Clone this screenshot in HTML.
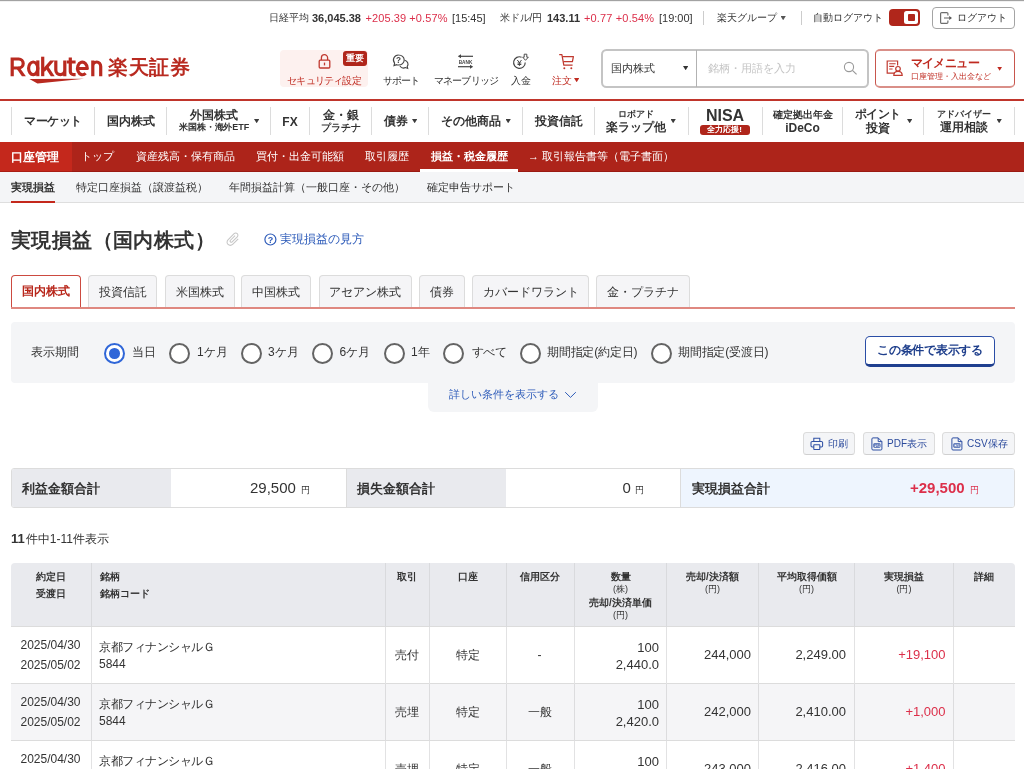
<!DOCTYPE html>
<html lang="ja">
<head>
<meta charset="utf-8">
<title>実現損益（国内株式）</title>
<style>
*{box-sizing:border-box;margin:0;padding:0}
html,body{width:1024px;height:769px;overflow:hidden;background:#fff}
body{font-family:"Liberation Sans",sans-serif;color:#333;position:relative;font-size:12px;line-height:1}
#wrap{position:absolute;left:0;top:0;width:1024px;height:769px;overflow:hidden;will-change:transform;opacity:0.999}
.a{position:absolute;white-space:nowrap;overflow:visible}
.b{font-weight:bold}
.r{color:#dc2f4a !important}
.c{text-align:center}
.rt{text-align:right}
/* top bar */
#topline{left:0;top:0;width:1024px;height:2px;background:linear-gradient(#a2a2a2 0,#a2a2a2 50%,#f1f1f1 50%,#f1f1f1 100%)}
.tb{top:12px;font-size:11px;height:12px;line-height:12px;color:#333}
.j{font-size:10px}
.dn{width:5.3px;height:4.3px;color:#3c3c3c;background:currentColor;clip-path:polygon(0 0,100% 0,50% 100%)}
.hl{top:75px;font-size:10px;height:11px;line-height:11px;letter-spacing:-0.8px;color:#333}
.vsep{width:1px;background:#ccc}
/* nav */
.nv{font-size:12px;font-weight:bold;color:#333;text-align:center;line-height:14px}
.kn{letter-spacing:-0.5px}
.kn2{letter-spacing:-0.3px}
.nv small{font-size:9px;display:block;line-height:11px;font-weight:bold}
.ns{top:107px;height:28px;width:1px;background:#dcdcdc}
.tri{font-size:7px;font-weight:normal}
/* red bar */
#redbar{left:0;top:142px;width:1024px;height:30px;background:#ad241a}
#redact{left:0;top:142px;width:72px;height:30px;background:#c4281c}
.rb{top:150px;height:12px;line-height:12px;font-size:11px;color:#fff}
/* subnav */
#subnav{left:0;top:172px;width:1024px;height:31px;background:#f4f5f7;border-bottom:1px solid #dedede}
.sn{top:181px;height:12px;line-height:12px;font-size:11px;color:#333}

/* main */
.tab{top:275px;height:32.3px;border:1px solid #dcdcdc;border-bottom:none;border-radius:4px 4px 0 0;background:#f5f5f7;font-size:12px;line-height:32px;text-align:center;color:#333}
.tab.act{background:#fff;border:1.2px solid #cc4a40;border-bottom:none;color:#b8281c;font-weight:bold;line-height:31.6px}
.fl{top:346px;height:13px;line-height:13px;font-size:12px;color:#333}
.rd{top:342.7px;width:21px;height:21px;margin-left:-0.4px;border-radius:50%;border:2px solid #646464;background:#fff}
.rd.on{border:2px solid #2f66d8}
.rd.on:after{content:"";position:absolute;left:3.3px;top:3.3px;width:10.6px;height:10.6px;border-radius:50%;background:#2f66d8}
.ab{top:432px;height:23px;border:1px solid #dcdcdc;border-bottom-color:#d0d0d0;border-radius:3.5px;background:#f4f5f7}
.abt{top:438px;height:12px;line-height:12px;font-size:10px;color:#2b4a9c}
.sm{top:480.5px;font-size:13.4px;height:15px;line-height:15px;color:#333}
.sv{top:480px;font-size:15px;height:16px;line-height:16px;color:#333}
.yen{top:485px;font-size:9px;height:10px;line-height:10px;color:#333}
.vl{top:0;width:1px;height:240px;background:linear-gradient(#d9dadd 0,#d9dadd 64px,#e2e2e3 64px,#e2e2e3 121px,#dcdcde 121px,#dcdcde 178px,#e2e2e3 178px)}
.th{font-size:10px;font-weight:bold;line-height:17px;color:#333}
.th .l1{display:block;line-height:12px}
.th .u{display:block;font-weight:normal;font-size:9px;line-height:12px}
.td{font-size:12px;line-height:14px;color:#333}
.nm{font-size:13px}
.kn3{letter-spacing:-0.45px}
</style>
</head>
<body>
<div id="wrap">
<!-- TOP BAR -->
<div class="a" id="topline"></div>
<div class="a tb j" style="left:268.5px">日経平均</div>
<div class="a tb b" style="left:312px">36,045.38</div>
<div class="a tb r" style="left:365.5px;letter-spacing:0.09px">+205.39 +0.57%</div>
<div class="a tb" style="left:452px">[15:45]</div>
<div class="a tb j" style="left:499.5px">米ドル/円</div>
<div class="a tb b" style="left:547px">143.11</div>
<div class="a tb r" style="left:584px;letter-spacing:0.15px">+0.77 +0.54%</div>
<div class="a tb" style="left:659px">[19:00]</div>
<div class="a vsep" style="left:703px;top:11px;height:14px"></div>
<div class="a tb j" style="left:716.5px">楽天グループ</div>
<div class="a dn" style="left:780.5px;top:16px;color:#555"></div>
<div class="a vsep" style="left:800.5px;top:11px;height:14px"></div>
<div class="a tb j" style="left:813px">自動ログアウト</div>
<div class="a" style="left:889px;top:9.2px;width:30.8px;height:17px;border-radius:4px;background:#b0261b"></div>
<div class="a" style="left:904px;top:11.2px;width:14px;height:13px;border-radius:2.5px;background:#fff"></div>
<div class="a" style="left:908px;top:14.2px;width:7px;height:7px;border-radius:1px;background:#b0261b"></div>
<div class="a" style="left:932px;top:7px;width:83px;height:22px;border:1px solid #a4a4a4;border-radius:4px;background:#fff"></div>
<svg class="a" style="left:940.2px;top:11.8px" width="13" height="12" viewBox="0 0 13 12"><path d="M7.9 3.6V1.7a1.1 1.1 0 0 0-1.1-1.1H1.7a1.1 1.1 0 0 0-1.1 1.1v8.6a1.1 1.1 0 0 0 1.1 1.1h5.1a1.1 1.1 0 0 0 1.1-1.1V8.4" fill="none" stroke="#6e6e6e" stroke-width="1.2"/><path d="M4 6h5.4" stroke="#6e6e6e" stroke-width="1.1"/><path d="M9.2 3.9L12 6 9.2 8.1z" fill="#555"/></svg>
<div class="a tb j" style="left:957px">ログアウト</div>

<!-- HEADER -->
<div class="a" id="logo" style="left:10px;top:55px;width:100px;height:30px">
<svg width="100" height="30" viewBox="0 0 100 30" aria-label="Rakuten"><title>Rakuten</title><g fill="none" stroke="#b92a20" stroke-width="3.2" stroke-linejoin="round">
<path d="M2.2 21.2V2.4M2.2 4H8.7a4.5 4.5 0 0 1 0 9H2.2"/>
<ellipse cx="23.2" cy="13.3" rx="4.6" ry="6.3"/><path d="M27.8 5.4V21.2"/>
<path d="M32.7 1.7V21.2"/>
<path d="M45.8 5.4V15.1a4.5 4.5 0 0 0 9 0V5.4M54.8 5.4V21.2"/>
<path d="M60.3 2.4V16.4a3.2 3.2 0 0 0 3.2 3.2H65.6M56.8 7H65.6"/>
<path d="M67.6 13.5H77.3A4.9 6.3 0 1 0 75.6 18.2"/>
<path d="M82.8 21.2V5.4M82.8 11.4a3.95 4.4 0 0 1 7.9 0V21.2"/>
</g><g fill="#b92a20"><path d="M6.3 13.33L8.9 11.47 15.84 21.2H11.92z"/><path d="M32.29 14.55L34.71 16.65 44.43 5.4H40.2z"/><path d="M35.06 12.48L37.74 10.72 44.66 21.2H40.81z"/><path d="M19.4 24 L74 23.8 L27.5 28.4 Z"/></g></svg>
</div>
<div class="a b" style="left:108px;top:57px;font-size:20px;line-height:21px;height:21px;color:#b92a20;letter-spacing:0.5px">楽天証券</div>

<div class="a" style="left:280px;top:49.5px;width:88px;height:37px;background:#fdf1ef;border-radius:4px"></div>
<svg class="a" style="left:318px;top:54px" width="13" height="15" viewBox="0 0 13 15"><rect x="1.2" y="6.2" width="10.6" height="7.8" rx="1" fill="none" stroke="#c0392f" stroke-width="1.3"/><path d="M3.4 6V3.8a3.1 3.1 0 0 1 6.2 0V6" fill="none" stroke="#c0392f" stroke-width="1.3"/><path d="M6.5 8.6v2.8" stroke="#c0392f" stroke-width="1.3"/></svg>
<div class="a c hl" style="left:280px;width:88px;color:#bf2a20">セキュリティ設定</div>
<div class="a c" style="left:343px;top:51px;width:24px;height:14.5px;border-radius:3px;background:#b0261b;color:#fff;font-size:9px;line-height:14px;font-weight:bold">重要</div>
<svg class="a" style="left:392px;top:54px" width="18" height="16" viewBox="0 0 18 16"><path d="M6.6 1a5.6 5 0 0 1 0 10 6 6 0 0 1-2-.35L2 11.6l.6-2.4A5 5 0 0 1 6.6 1z" fill="#fff" stroke="#444" stroke-width="1.1"/><path d="M12.6 6.2a4.4 4 0 0 1 2.6 6.2l.5 2-2.2-.8a4.6 4.6 0 0 1-5.6-1.6" fill="none" stroke="#444" stroke-width="1.1"/><text x="6.6" y="9" font-family="Liberation Sans, sans-serif" font-size="8.2" font-weight="bold" text-anchor="middle" fill="#444">?</text></svg>
<div class="a c hl" style="left:371px;width:60px">サポート</div>
<svg class="a" style="left:457px;top:54px" width="17" height="15" viewBox="0 0 17 15"><path d="M3 2.3H16" stroke="#444" stroke-width="1.2"/><path d="M0.8 2.3L4 0.3V4.3z" fill="#444"/><path d="M1 12.7H14" stroke="#444" stroke-width="1.2"/><path d="M16.2 12.7L13 10.7V14.7z" fill="#444"/><text x="8.5" y="9.5" font-family="Liberation Sans, sans-serif" font-size="5.6" font-weight="bold" text-anchor="middle" fill="#444" textLength="13.6" lengthAdjust="spacingAndGlyphs">BANK</text></svg>
<div class="a c hl" style="left:426px;width:80px">マネーブリッジ</div>
<svg class="a" style="left:512px;top:53px" width="18" height="17" viewBox="0 0 18 17"><path d="M9.6 4.2A5.8 5.8 0 1 0 13.2 9.4" fill="none" stroke="#444" stroke-width="1.15"/><path d="M5.3 7L7.4 9.7 9.5 7M7.4 9.7v3.2M5.5 10h3.8M5.5 11.5h3.8" fill="none" stroke="#444" stroke-width="1"/><path d="M12.2 1.2h2.6v3h1.5l-2.8 3.1L10.7 4.2h1.5z" fill="#fff" stroke="#444" stroke-width="0.95" stroke-linejoin="round"/></svg>
<div class="a c hl" style="left:501px;width:40px;letter-spacing:0">入金</div>
<svg class="a" style="left:559px;top:54px" width="16" height="16" viewBox="0 0 16 16"><path d="M0.2 0.7H2.9L4.8 11.1H13.6" fill="none" stroke="#c0392f" stroke-width="1.25" stroke-linejoin="round"/><path d="M3.5 2.6H14.4L13.4 7.7H4.4" fill="none" stroke="#c0392f" stroke-width="1.25" stroke-linejoin="round"/><circle cx="5.3" cy="14.2" r="1" fill="#c0392f"/><circle cx="12.3" cy="14.2" r="1" fill="#c0392f"/></svg>
<div class="a hl" style="left:552px;color:#bf2a20;letter-spacing:0">注文</div>
<div class="a dn" style="left:574px;top:78px;color:#bf2a20"></div>

<div class="a" style="left:601px;top:49px;width:268px;height:39px;border:2px solid #c4c4c4;border-radius:5.5px;background:#fff"></div>
<div class="a" style="left:696px;top:50px;width:1px;height:37px;background:#b2b2b2"></div>
<div class="a" style="left:610.5px;top:61.5px;font-size:11px;height:12px;line-height:12px">国内株式</div>
<div class="a dn" style="left:683px;top:66px;color:#333"></div>
<div class="a" style="left:708px;top:62px;font-size:11.3px;height:13px;line-height:13px;color:#c4c4c4">銘柄・用語を入力</div>
<svg class="a" style="left:843px;top:61px" width="15" height="15" viewBox="0 0 15 15"><circle cx="6" cy="6" r="4.6" fill="none" stroke="#999" stroke-width="1.1"/><path d="M9.4 9.4L13.6 13.4" stroke="#999" stroke-width="1.2"/></svg>

<div class="a" style="left:875px;top:49px;width:140px;height:39px;border:2px solid #d98f88;border-left:1px solid #c8564d;border-right:1px solid #c8564d;border-radius:5px;background:#fff"></div>
<svg class="a" style="left:886px;top:60px" width="18" height="17" viewBox="0 0 18 17"><path d="M9.6 13.2H1.2V1h10.4v4.6" fill="none" stroke="#c0392f" stroke-width="1.2"/><path d="M3.2 3.8h6.4M3.2 6.4h5M3.2 9h3.4" stroke="#c0392f" stroke-width="1.1"/><circle cx="12" cy="8.8" r="2.3" fill="#fff" stroke="#c0392f" stroke-width="1.2"/><path d="M7.8 15.4c0-2.6 1.8-4 4.2-4s4.2 1.4 4.2 4z" fill="#fff" stroke="#c0392f" stroke-width="1.2"/></svg>
<div class="a b" style="left:910.5px;top:56.5px;font-size:12px;height:13px;line-height:13px;color:#bf2a20;letter-spacing:-0.6px">マイメニュー</div>
<div class="a" style="left:910.5px;top:72px;font-size:8px;height:9px;line-height:9px;color:#bf2a20">口座管理・入出金など</div>
<div class="a dn" style="left:997px;top:66.5px;color:#bf2a20"></div>

<div class="a" style="left:0;top:99px;width:1024px;height:2px;background:#c0352b"></div>

<!-- GLOBAL NAV -->
<div class="a ns" style="left:11px"></div>
<div class="a nv kn" style="left:12px;top:114px;width:82px">マーケット</div>
<div class="a ns" style="left:94px"></div>
<div class="a nv" style="left:95px;top:114px;width:71px">国内株式</div>
<div class="a ns" style="left:166px"></div>
<div class="a nv" style="left:169px;top:108px;width:90px">外国株式<small style="letter-spacing:-0.1px">米国株・海外ETF</small></div>
<div class="a dn" style="left:254px;top:119px"></div>
<div class="a ns" style="left:270px"></div>
<div class="a nv" style="left:271px;top:115px;width:38px">FX</div>
<div class="a ns" style="left:309px"></div>
<div class="a nv" style="left:310px;top:108px;width:61px">金・銀<small style="font-size:9.5px">プラチナ</small></div>
<div class="a ns" style="left:371px"></div>
<div class="a nv" style="left:383.5px;top:114px;text-align:left">債券</div>
<div class="a dn" style="left:412px;top:119px"></div>
<div class="a ns" style="left:428px"></div>
<div class="a nv" style="left:441px;top:114px;text-align:left">その他商品</div>
<div class="a dn" style="left:505.5px;top:119px"></div>
<div class="a ns" style="left:522px"></div>
<div class="a nv" style="left:523px;top:114px;width:71px">投資信託</div>
<div class="a ns" style="left:594px"></div>
<div class="a nv" style="left:594px;top:109px;width:84px"><small style="line-height:11px">ロボアド</small>楽ラップ他</div>
<div class="a dn" style="left:670.5px;top:119px"></div>
<div class="a ns" style="left:688px"></div>
<div class="a nv" style="left:689px;top:108px;width:72px;font-size:16px;line-height:16px">NISA</div>
<div class="a c b" style="left:699.5px;top:125px;width:50px;height:10px;border-radius:3px;background:#b0261b;color:#fff;font-size:8px;line-height:10px">全力応援!</div>
<div class="a ns" style="left:762px"></div>
<div class="a nv" style="left:763px;top:109px;width:79px"><small style="line-height:11px;font-size:9.5px;margin-bottom:1px">確定拠出年金</small>iDeCo</div>
<div class="a ns" style="left:842px"></div>
<div class="a nv" style="left:843px;top:108px;width:69px;line-height:13.5px"><span class="kn">ポイント</span><br>投資</div>
<div class="a dn" style="left:907px;top:119px"></div>
<div class="a ns" style="left:923px"></div>
<div class="a nv" style="left:924px;top:109px;width:79px"><small style="line-height:11px">アドバイザー</small>運用相談</div>
<div class="a dn" style="left:996.5px;top:119px"></div>
<div class="a ns" style="left:1014px"></div>

<!-- RED BAR -->
<div class="a" id="redbar"></div>
<div class="a" id="redact"></div>
<div class="a rb b" style="left:11px;top:151px;font-size:12px">口座管理</div>
<div class="a rb" style="left:81px">トップ</div>
<div class="a rb" style="left:136px">資産残高・保有商品</div>
<div class="a rb" style="left:256px">買付・出金可能額</div>
<div class="a rb" style="left:365px">取引履歴</div>
<div class="a rb b" style="left:431px">損益・税金履歴</div>
<div class="a" style="left:0;top:171px;width:1024px;height:1px;background:rgba(120,10,5,0.35)"></div>
<div class="a" style="left:420px;top:169px;width:98px;height:2.5px;background:#fff"></div>
<div class="a rb" style="left:528px">→ 取引報告書等（電子書面）</div>

<!-- SUB NAV -->
<div class="a" id="subnav"></div>
<div class="a sn b" style="left:11px">実現損益</div>
<div class="a" style="left:11px;top:201px;width:44px;height:2px;background:#c4281c"></div>
<div class="a sn" style="left:76px">特定口座損益（譲渡益税）</div>
<div class="a sn" style="left:229px">年間損益計算（一般口座・その他）</div>
<div class="a sn" style="left:427px">確定申告サポート</div>


<!-- TITLE -->
<div class="a b" style="left:11px;top:229px;font-size:20px;height:22px;line-height:22px;color:#333;letter-spacing:0.4px">実現損益（国内株式）</div>
<svg class="a" style="left:223px;top:229px" width="20" height="20" viewBox="0 0 20 20"><g transform="translate(10 10.4) rotate(45) scale(0.69) translate(-12.5 -12)"><path d="M16.5 6v11.5c0 2.21-1.79 4-4 4s-4-1.79-4-4V5c0-1.38 1.12-2.5 2.5-2.5s2.5 1.12 2.5 2.5v10.5c0 .55-.45 1-1 1s-1-.45-1-1V6H10v9.5c0 1.38 1.12 2.5 2.5 2.5s2.5-1.12 2.5-2.5V5c0-2.21-1.79-4-4-4S7 2.79 7 5v12.5c0 3.04 2.46 5.5 5.5 5.5s5.5-2.46 5.5-5.5V6h-1.5z" fill="#c6c6c6"/></g></svg>
<svg class="a" style="left:264px;top:232.5px" width="13" height="13" viewBox="0 0 13 13"><circle cx="6.4" cy="6.5" r="5.5" fill="none" stroke="#2d5bb9" stroke-width="1.2"/><text x="6.4" y="9.7" font-family="Liberation Sans, sans-serif" font-size="9" font-weight="bold" text-anchor="middle" fill="#2d5bb9">?</text></svg>
<div class="a" style="left:280px;top:233px;font-size:12px;height:13px;line-height:13px;color:#2d5bb9">実現損益の見方</div>

<!-- TABS -->
<div class="a" style="left:10.5px;top:307.2px;width:1004.5px;height:1.4px;background:#df8880"></div>
<div class="a tab act" style="left:10.5px;width:70.5px">国内株式</div>
<div class="a tab" style="left:88px;width:69px">投資信託</div>
<div class="a tab" style="left:165px;width:69.5px">米国株式</div>
<div class="a tab" style="left:241px;width:69.5px">中国株式</div>
<div class="a tab" style="left:318.5px;width:93px">アセアン株式</div>
<div class="a tab" style="left:419px;width:46px">債券</div>
<div class="a tab" style="left:472px;width:117px">カバードワラント</div>
<div class="a tab" style="left:596px;width:94px">金・プラチナ</div>

<!-- FILTER -->
<div class="a" style="left:10.5px;top:322px;width:1004px;height:61px;background:#f4f5f7;border-radius:4px"></div>
<div class="a" style="left:428px;top:379px;width:169.5px;height:32.5px;background:#f4f5f7;border-radius:0 0 6px 6px"></div>
<div class="a fl" style="left:31px">表示期間</div>
<div class="a rd on" style="left:104.5px"></div><div class="a fl" style="left:131.5px">当日</div>
<div class="a rd" style="left:169.5px"></div><div class="a fl" style="left:197px">1ケ月</div>
<div class="a rd" style="left:241px"></div><div class="a fl" style="left:268px">3ケ月</div>
<div class="a rd" style="left:312.5px"></div><div class="a fl" style="left:339.5px">6ケ月</div>
<div class="a rd" style="left:384px"></div><div class="a fl" style="left:411px">1年</div>
<div class="a rd" style="left:443.5px"></div><div class="a fl" style="left:471.5px;letter-spacing:-0.5px">すべて</div>
<div class="a rd" style="left:520px"></div><div class="a fl" style="left:547px;letter-spacing:-0.2px">期間指定(約定日)</div>
<div class="a rd" style="left:651px"></div><div class="a fl" style="left:678px;letter-spacing:-0.2px">期間指定(受渡日)</div>
<div class="a c b" style="left:865px;top:336px;width:130px;height:30.5px;border:1px solid #2a4da6;border-bottom:3px solid #1f3f8f;border-radius:5px;background:#fff;color:#1f3f8c;font-size:12px;line-height:27px;letter-spacing:-0.3px">この条件で表示する</div>
<div class="a" style="left:448.5px;top:388px;height:13px;line-height:13px;font-size:11px;color:#2d5bb9">詳しい条件を表示する</div>
<svg class="a" style="left:564px;top:391px" width="13" height="8" viewBox="0 0 13 8"><path d="M1.2 1.2L6.5 6.4 11.8 1.2" fill="none" stroke="#2d5bb9" stroke-width="1"/></svg>

<!-- ACTION BUTTONS -->
<div class="a ab" style="left:802.5px;width:52.5px"></div>
<svg class="a" style="left:810px;top:436.5px" width="14" height="14" viewBox="0 0 14 14"><path d="M3.8 4.4V1.2h6v3.2" fill="none" stroke="#2f50a4" stroke-width="1.05"/><path d="M3.8 10H2.2a1.2 1.2 0 0 1-1.2-1.2V5.6a1.2 1.2 0 0 1 1.2-1.2h9.2a1.2 1.2 0 0 1 1.2 1.2v3.2a1.2 1.2 0 0 1-1.2 1.2H9.8" fill="none" stroke="#2f50a4" stroke-width="1.05"/><rect x="3.8" y="7.8" width="6" height="4.6" rx=".4" fill="none" stroke="#2f50a4" stroke-width="1.05"/></svg>
<div class="a abt" style="left:828px">印刷</div>
<div class="a ab" style="left:862.5px;width:72.5px"></div>
<svg class="a" style="left:871px;top:436.5px" width="12" height="14" viewBox="0 0 12 14"><path d="M7.2 .9H2A1.1 1.1 0 0 0 .9 2v9.9A1.1 1.1 0 0 0 2 13h7.8a1.1 1.1 0 0 0 1.1-1.1V4.6z" fill="none" stroke="#2f50a4" stroke-width="1"/><path d="M7.2 .9v3.7h3.7" fill="none" stroke="#2f50a4" stroke-width="1"/><rect x="2.7" y="6.6" width="6.4" height="3.8" rx=".5" fill="none" stroke="#2f50a4" stroke-width=".8"/><text x="5.9" y="9.6" font-family="Liberation Sans, sans-serif" font-size="3" font-weight="bold" text-anchor="middle" fill="#2f50a4">PDF</text></svg>
<div class="a abt" style="left:887px">PDF表示</div>
<div class="a ab" style="left:942px;width:73px"></div>
<svg class="a" style="left:950.5px;top:436.5px" width="12" height="14" viewBox="0 0 12 14"><path d="M7.2 .9H2A1.1 1.1 0 0 0 .9 2v9.9A1.1 1.1 0 0 0 2 13h7.8a1.1 1.1 0 0 0 1.1-1.1V4.6z" fill="none" stroke="#2f50a4" stroke-width="1"/><path d="M7.2 .9v3.7h3.7" fill="none" stroke="#2f50a4" stroke-width="1"/><rect x="2.7" y="6.6" width="6.4" height="3.8" rx=".5" fill="none" stroke="#2f50a4" stroke-width=".8"/><text x="5.9" y="9.6" font-family="Liberation Sans, sans-serif" font-size="3" font-weight="bold" text-anchor="middle" fill="#2f50a4">CSV</text></svg>
<div class="a abt" style="left:967px">CSV保存</div>

<!-- SUMMARY -->
<div class="a" style="left:10.5px;top:467.5px;width:1004.5px;height:40.5px;border:1px solid #dcdcdc;border-radius:3px;background:#fff;overflow:hidden">
<div class="a" style="left:0;top:0;width:159.5px;height:39px;background:#e9eaee"></div>
<div class="a" style="left:334px;top:0;width:160px;height:39px;background:#e9eaee;border-left:1px solid #dcdcdc"></div>
<div class="a" style="left:668px;top:0;width:336px;height:39px;background:#eef5fe;border-left:1px solid #dcdcdc"></div>
</div>
<div class="a b sm" style="left:21.5px">利益金額合計</div>
<div class="a sv" style="left:250px">29,500</div><div class="a yen" style="left:300.5px">円</div>
<div class="a b sm" style="left:357px">損失金額合計</div>
<div class="a sv" style="left:622.5px">0</div><div class="a yen" style="left:634.5px">円</div>
<div class="a b sm" style="left:692px">実現損益合計</div>
<div class="a sv b r" style="left:910px">+29,500</div><div class="a yen r" style="left:970px">円</div>

<!-- COUNT -->
<div class="a" style="left:11px;top:530.5px;height:15px;line-height:15px;font-size:12px;color:#333"><b style="font-size:13px;margin-right:1px">11</b>件中1-11件表示</div>

<!-- TABLE -->
<div class="a" id="tbl" style="left:10.5px;top:562.5px;width:1004.5px;height:207px;overflow:hidden;border-radius:4px 4px 0 0">
<div class="a" style="left:0;top:0;width:1005px;height:64px;background:#e9eaee"></div>
<div class="a" style="left:0;top:63.5px;width:1005px;height:57.5px;background:#fff;border-bottom:1px solid #dcdcdc;border-top:1px solid #dcdcdc"></div>
<div class="a" style="left:0;top:121px;width:1005px;height:57px;background:#f5f5f7;border-bottom:1px solid #dcdcdc"></div>
<div class="a" style="left:0;top:178px;width:1005px;height:57px;background:#fff"></div>
<div class="a vl" style="left:80px"></div>
<div class="a vl" style="left:374.5px"></div>
<div class="a vl" style="left:418.5px"></div>
<div class="a vl" style="left:495px"></div>
<div class="a vl" style="left:563.5px"></div>
<div class="a vl" style="left:655px"></div>
<div class="a vl" style="left:747px"></div>
<div class="a vl" style="left:843px"></div>
<div class="a vl" style="left:942px"></div>

<div class="a th c" style="left:0;top:5px;width:80px">約定日<br>受渡日</div>
<div class="a th" style="left:89px;top:5px">銘柄<br>銘柄コード</div>
<div class="a th c" style="left:374px;top:5px;width:45px">取引</div>
<div class="a th c" style="left:419px;top:5px;width:76px">口座</div>
<div class="a th c" style="left:495px;top:5px;width:68px">信用区分</div>
<div class="a th c" style="left:564px;top:8px;width:92px"><span class="l1">数量</span><span class="u">(株)</span><span class="l1" style="margin-top:2.5px">売却/決済単価</span><span class="u">(円)</span></div>
<div class="a th c" style="left:656px;top:8px;width:92px"><span class="l1">売却/決済額</span><span class="u">(円)</span></div>
<div class="a th c" style="left:748px;top:8px;width:96px"><span class="l1">平均取得価額</span><span class="u">(円)</span></div>
<div class="a th c" style="left:844px;top:8px;width:99px"><span class="l1">実現損益</span><span class="u">(円)</span></div>
<div class="a th c" style="left:943px;top:5px;width:61px">詳細</div>

<div class="a td c" style="left:0;top:73.5px;width:80px;line-height:19.7px">2025/04/30<br>2025/05/02</div>
<div class="a td" style="left:88.5px;top:76.5px;line-height:16.5px"><span class="kn3">京都フィナンシャルＧ</span><br>5844</div>
<div class="a td c" style="left:374px;top:85.5px;width:45px">売付</div>
<div class="a td c" style="left:419px;top:85.5px;width:76px">特定</div>
<div class="a td c" style="left:495px;top:85.5px;width:68px">-</div>
<div class="a td rt nm" style="left:564px;top:76px;width:84.5px;line-height:17.3px">100<br>2,440.0</div>
<div class="a td rt nm" style="left:656px;top:85.5px;width:84.5px">244,000</div>
<div class="a td rt nm" style="left:748px;top:85.5px;width:87.5px">2,249.00</div>
<div class="a td rt nm r" style="left:844px;top:85.5px;width:91px">+19,100</div>
<div class="a td c" style="left:0;top:130.5px;width:80px;line-height:19.7px">2025/04/30<br>2025/05/02</div>
<div class="a td" style="left:88.5px;top:133.5px;line-height:16.5px"><span class="kn3">京都フィナンシャルＧ</span><br>5844</div>
<div class="a td c" style="left:374px;top:142.5px;width:45px">売埋</div>
<div class="a td c" style="left:419px;top:142.5px;width:76px">特定</div>
<div class="a td c" style="left:495px;top:142.5px;width:68px">一般</div>
<div class="a td rt nm" style="left:564px;top:133px;width:84.5px;line-height:17.3px">100<br>2,420.0</div>
<div class="a td rt nm" style="left:656px;top:142.5px;width:84.5px">242,000</div>
<div class="a td rt nm" style="left:748px;top:142.5px;width:87.5px">2,410.00</div>
<div class="a td rt nm r" style="left:844px;top:142.5px;width:91px">+1,000</div>
<div class="a td c" style="left:0;top:187.5px;width:80px;line-height:19.7px">2025/04/30<br>2025/05/02</div>
<div class="a td" style="left:88.5px;top:190.5px;line-height:16.5px"><span class="kn3">京都フィナンシャルＧ</span><br>5844</div>
<div class="a td c" style="left:374px;top:199.5px;width:45px">売埋</div>
<div class="a td c" style="left:419px;top:199.5px;width:76px">特定</div>
<div class="a td c" style="left:495px;top:199.5px;width:68px">一般</div>
<div class="a td rt nm" style="left:564px;top:190px;width:84.5px;line-height:17.3px">100<br>2,430.0</div>
<div class="a td rt nm" style="left:656px;top:199.5px;width:84.5px">243,000</div>
<div class="a td rt nm" style="left:748px;top:199.5px;width:87.5px">2,416.00</div>
<div class="a td rt nm r" style="left:844px;top:199.5px;width:91px">+1,400</div>
</div>
</div>
</body>
</html>
